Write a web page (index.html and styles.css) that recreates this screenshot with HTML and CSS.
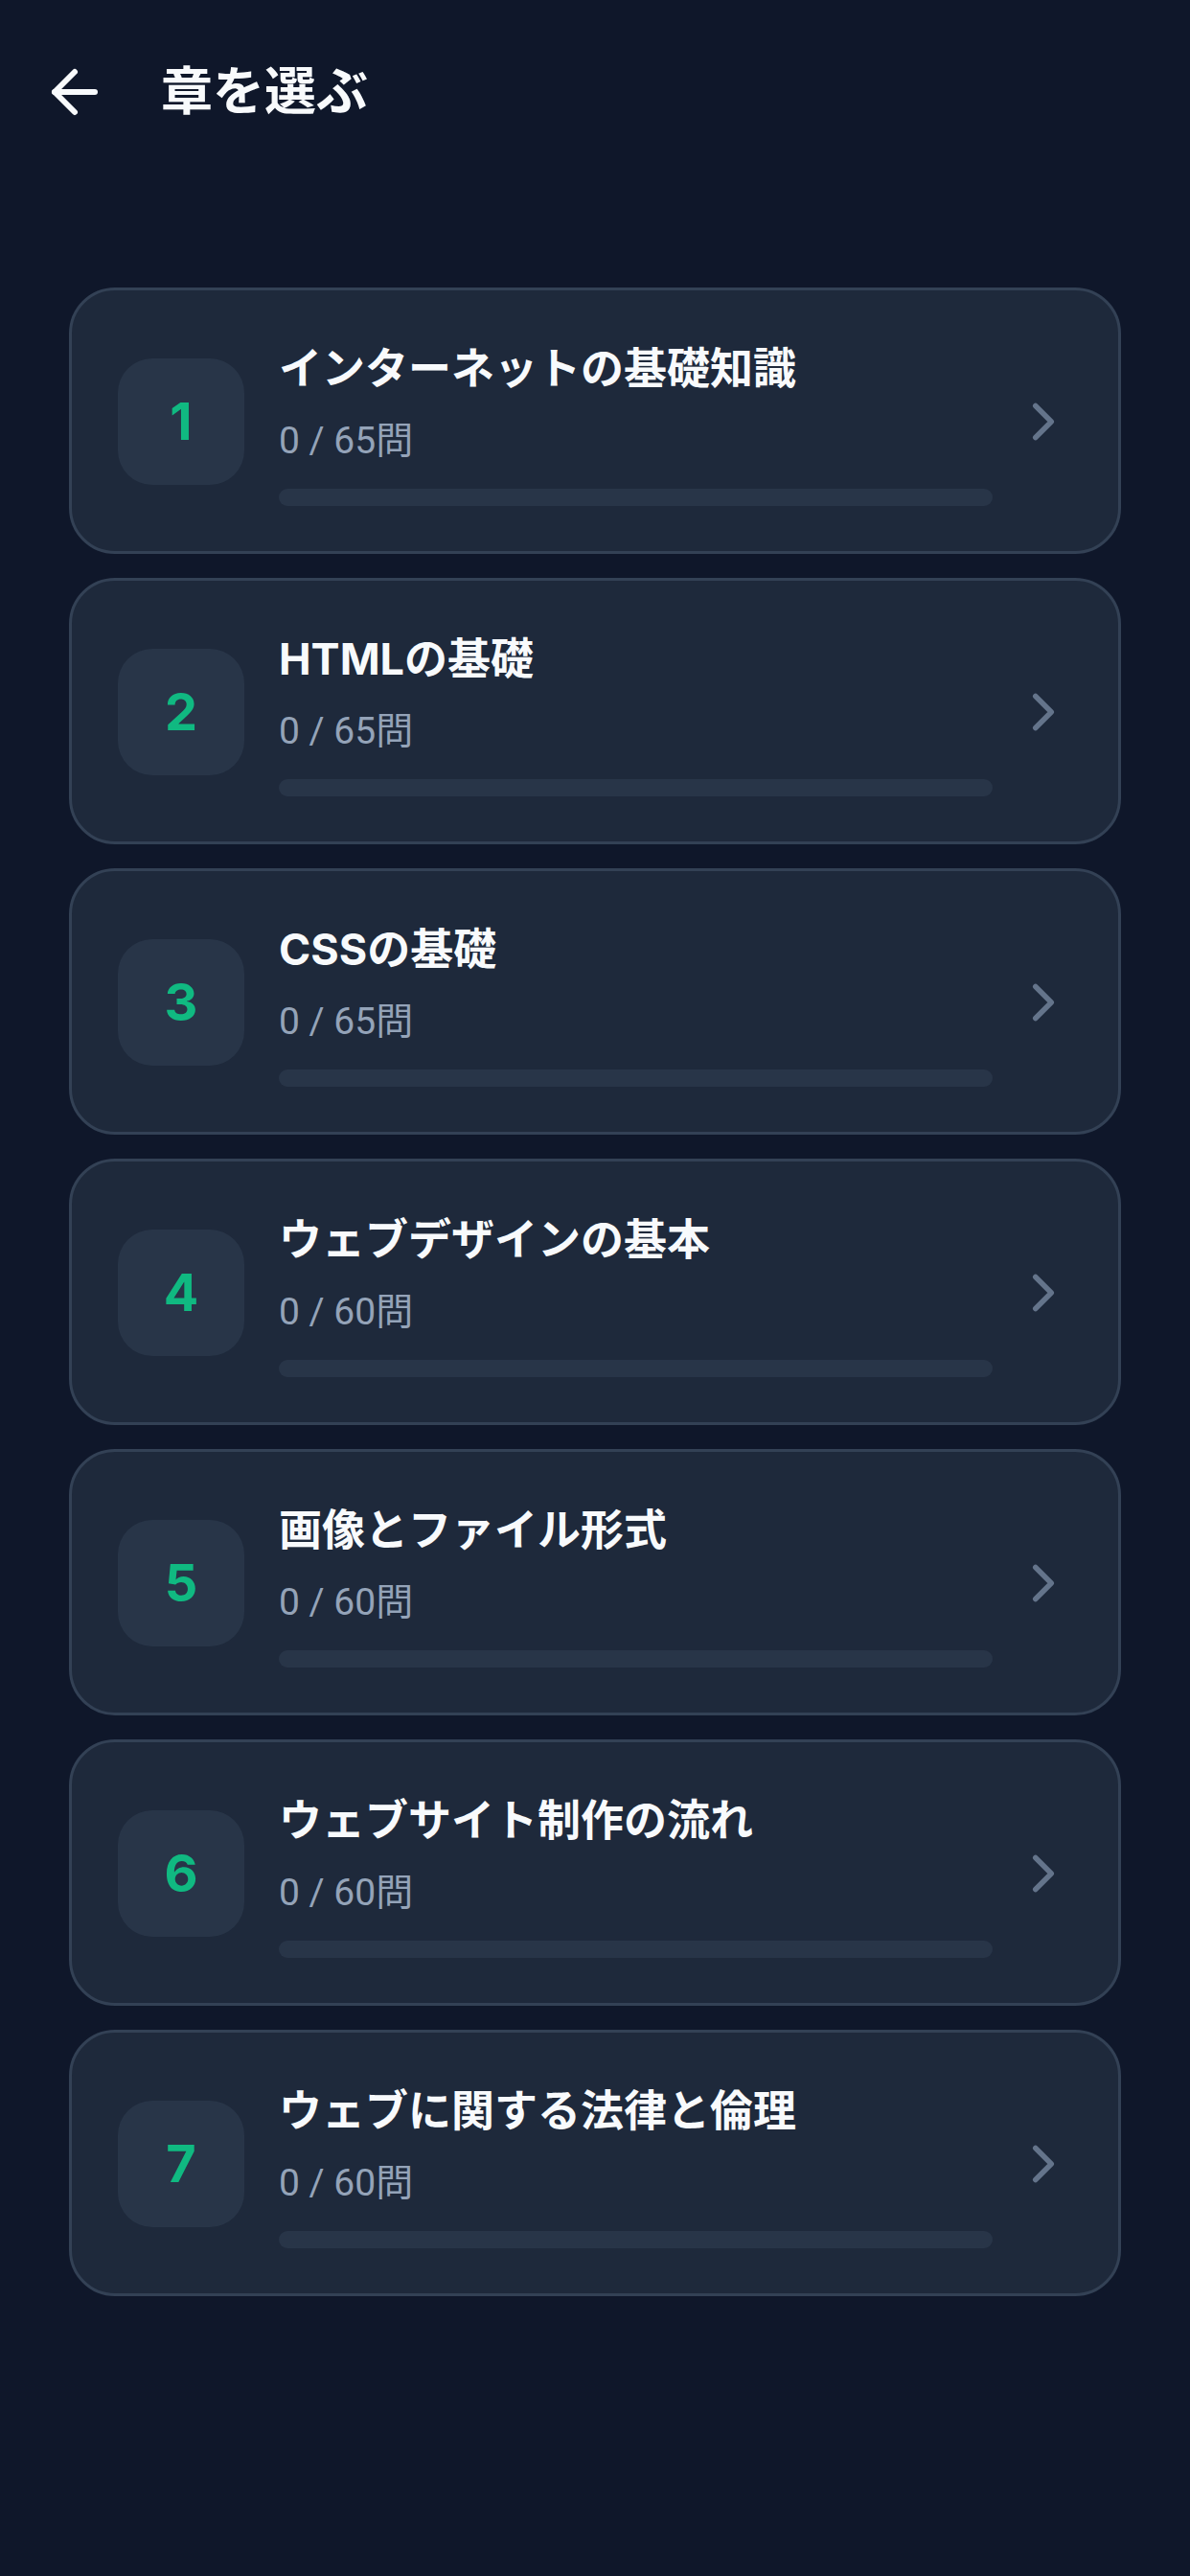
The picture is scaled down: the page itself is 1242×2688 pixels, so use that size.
FILE: index.html
```html
<!DOCTYPE html>
<html lang="ja">
<head>
<meta charset="utf-8">
<title>章を選ぶ</title>
<link rel="stylesheet" href="styles.css">
</head>
<body>
<div class="screen">
  <header class="header">
    <button class="back" aria-label="戻る">
      <svg viewBox="0 0 24 24" width="72" height="72" fill="none" stroke="currentColor" stroke-width="2" stroke-linecap="round" stroke-linejoin="round"><path d="m12 19-7-7 7-7"/><path d="M19 12H5"/></svg>
    </button>
    <h1 class="title">章を選ぶ</h1>
  </header>

  <main class="list">
    <a class="card">
      <div class="num">1</div>
      <div class="info">
        <div class="name">インターネットの基礎知識</div>
        <div class="count">0 / 65問</div>
        <div class="bar"><div class="fill" style="width:0%"></div></div>
      </div>
      <svg class="chev" viewBox="0 0 24 24" width="66" height="66" fill="none" stroke="currentColor" stroke-width="2" stroke-linecap="round" stroke-linejoin="round"><path d="m9 18 6-6-6-6"/></svg>
    </a>
    <a class="card">
      <div class="num">2</div>
      <div class="info">
        <div class="name">HTMLの基礎</div>
        <div class="count">0 / 65問</div>
        <div class="bar"><div class="fill" style="width:0%"></div></div>
      </div>
      <svg class="chev" viewBox="0 0 24 24" width="66" height="66" fill="none" stroke="currentColor" stroke-width="2" stroke-linecap="round" stroke-linejoin="round"><path d="m9 18 6-6-6-6"/></svg>
    </a>
    <a class="card">
      <div class="num">3</div>
      <div class="info">
        <div class="name">CSSの基礎</div>
        <div class="count">0 / 65問</div>
        <div class="bar"><div class="fill" style="width:0%"></div></div>
      </div>
      <svg class="chev" viewBox="0 0 24 24" width="66" height="66" fill="none" stroke="currentColor" stroke-width="2" stroke-linecap="round" stroke-linejoin="round"><path d="m9 18 6-6-6-6"/></svg>
    </a>
    <a class="card">
      <div class="num">4</div>
      <div class="info">
        <div class="name">ウェブデザインの基本</div>
        <div class="count">0 / 60問</div>
        <div class="bar"><div class="fill" style="width:0%"></div></div>
      </div>
      <svg class="chev" viewBox="0 0 24 24" width="66" height="66" fill="none" stroke="currentColor" stroke-width="2" stroke-linecap="round" stroke-linejoin="round"><path d="m9 18 6-6-6-6"/></svg>
    </a>
    <a class="card">
      <div class="num">5</div>
      <div class="info">
        <div class="name">画像とファイル形式</div>
        <div class="count">0 / 60問</div>
        <div class="bar"><div class="fill" style="width:0%"></div></div>
      </div>
      <svg class="chev" viewBox="0 0 24 24" width="66" height="66" fill="none" stroke="currentColor" stroke-width="2" stroke-linecap="round" stroke-linejoin="round"><path d="m9 18 6-6-6-6"/></svg>
    </a>
    <a class="card">
      <div class="num">6</div>
      <div class="info">
        <div class="name">ウェブサイト制作の流れ</div>
        <div class="count">0 / 60問</div>
        <div class="bar"><div class="fill" style="width:0%"></div></div>
      </div>
      <svg class="chev" viewBox="0 0 24 24" width="66" height="66" fill="none" stroke="currentColor" stroke-width="2" stroke-linecap="round" stroke-linejoin="round"><path d="m9 18 6-6-6-6"/></svg>
    </a>
    <a class="card">
      <div class="num">7</div>
      <div class="info">
        <div class="name">ウェブに関する法律と倫理</div>
        <div class="count">0 / 60問</div>
        <div class="bar"><div class="fill" style="width:0%"></div></div>
      </div>
      <svg class="chev" viewBox="0 0 24 24" width="66" height="66" fill="none" stroke="currentColor" stroke-width="2" stroke-linecap="round" stroke-linejoin="round"><path d="m9 18 6-6-6-6"/></svg>
    </a>
  </main>
</div>
</body>
</html>
```

FILE: styles.css
```css
* { box-sizing: border-box; }

html, body {
  margin: 0;
  padding: 0;
  background: #0f172a;
}

body {
  font-family: Inter, "Noto Sans CJK JP", sans-serif;
  color: #f8fafc;
  width: 1242px;
  min-height: 2688px;
}

.screen {
  display: flex;
  flex-direction: column;
}

.header {
  height: 192px;
  display: flex;
  align-items: center;
  padding-left: 42px;
}

.back {
  width: 72px;
  height: 72px;
  padding: 0;
  border: 0;
  background: none;
  color: #f8fafc;
  display: flex;
}

.title {
  margin: 0 0 0 54px;
  font-size: 54px;
  font-weight: 700;
  line-height: 72px;
  color: #f8fafc;
}

.list {
  padding: 108px 72px 0 72px;
  display: flex;
  flex-direction: column;
  gap: 25px;
}

.card {
  display: flex;
  align-items: center;
  height: 278px;
  padding: 48px 45px 47px 48px;
  background: #1e293b;
  border: 3px solid #334155;
  border-radius: 48px;
}

.num {
  flex: none;
  width: 132px;
  height: 132px;
  border-radius: 36px;
  background: #283548;
  color: #10b981;
  font-size: 54px;
  font-weight: 700;
  display: flex;
  align-items: center;
  justify-content: center;
}

.info {
  flex: 1;
  margin-left: 36px;
  display: flex;
  flex-direction: column;
}

.name {
  font-size: 45px;
  font-weight: 700;
  line-height: 68px;
  color: #f8fafc;
  white-space: nowrap;
}

.count {
  margin-top: 12px;
  font-family: Roboto, "Noto Sans CJK JP", sans-serif;
  font-size: 39px;
  font-weight: 400;
  line-height: 58px;
  color: #94a3b8;
}

.bar {
  margin-top: 21px;
  height: 18px;
  border-radius: 9px;
  background: #283548;
  overflow: hidden;
}

.fill {
  height: 100%;
  background: #10b981;
}

.chev {
  flex: none;
  margin-left: 20px;
  color: #64748b;
}
```
